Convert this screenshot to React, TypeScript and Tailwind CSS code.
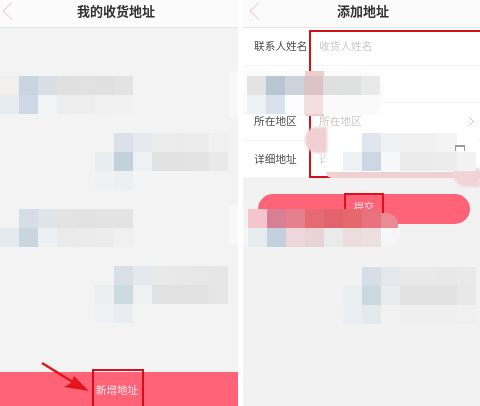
import React from 'react';

const Back: React.FC = () => (
    <svg width="14" height="20" viewBox="0 0 14 20" fill="none" stroke="#eebcc6" strokeWidth="1">
        <path d="M12 1.5L3 10l9 8.5" />
    </svg>
);

const Tiles: React.FC<{ className?: string; rows: string[][] }> = ({ className = '', rows }) => (
    <div className={`flex flex-col ${className}`}>
        {rows.map((row, i) => (
            <div key={i} className="flex h-[19px]">
                {row.map((color, j) => (
                    <div key={j} className={`w-[19px] h-full shrink-0 ${color}`} />
                ))}
            </div>
        ))}
    </div>
);

const Row: React.FC<{ label: string; hint: string; right?: React.ReactNode }> = ({ label, hint, right }) => (
    <div className="h-[37.5px] flex items-center border-b border-[#f4f4f4] pl-[11px] pr-[6px] text-[10.7px] whitespace-nowrap">
        <span className="w-[65px] text-[#4d4d4d]">{label}</span>
        <span className="flex-1 text-[#c9c9c9]">{hint}</span>
        {right}
    </div>
);

export default function App() {
    return (
        <div className="relative w-[480px] h-[406px] overflow-hidden bg-white flex justify-between font-['Liberation_Sans','Noto_Sans_CJK_SC',sans-serif] blur-[0.35px]">
            {/* left phone */}
            <div className="w-[238px] h-full flex flex-col bg-[#f3f3f3]">
                <header className="h-[28px] shrink-0 flex items-center justify-center relative bg-[#fbfbfb] border-b border-[#e4e4e4]">
                    <div className="absolute left-0 top-[1px]"><Back /></div>
                    <h1 className="text-[13px] font-bold text-[#333] mt-[-3px] ml-[-6px]">我的收货地址</h1>
                </header>
                <div className="flex-1 flex flex-col gap-[19px] pt-[48px]">
                    <Tiles rows={[
                        ['bg-[#f1f0ee]', 'bg-[#c9d5e0]', 'bg-[#d8dde6]', 'bg-[#e0e0e0]', 'bg-[#e1e1e1]', 'bg-[#e0e0e0]', 'bg-[#e3e3e3]'],
                        ['bg-[#e6ebf0]', 'bg-[#cfd9e5]', 'bg-[#f2f3f5]', 'bg-[#ededed]', 'bg-[#eeeeee]', 'bg-[#f0f0f0]', 'bg-[#f1f1f1]'],
                    ]} />
                    <Tiles className="pl-[95px]" rows={[
                        ['bg-[#f3f3f3]', 'bg-[#dbe1ea]', 'bg-[#e6eaf0]', 'bg-[#ececec]', 'bg-[#ebebeb]', 'bg-[#ececec]', 'bg-[#f0f0f0]'],
                        ['bg-[#e8edee]', 'bg-[#c3d1dc]', 'bg-[#eef1f3]', 'bg-[#e2e2e2]', 'bg-[#e2e2e2]', 'bg-[#e3e3e3]', 'bg-[#e9e9e9]'],
                        ['bg-[#f0f1f4]', 'bg-[#edf0f3]', 'bg-[#f4f4f4]', 'bg-[#f4f4f4]', 'bg-[#f4f4f4]', 'bg-[#f4f4f4]', 'bg-[#f4f4f4]'],
                    ]} />
                    <Tiles rows={[
                        ['bg-[#f3f3f3]', 'bg-[#d5dee6]', 'bg-[#dfe4ea]', 'bg-[#e3e3e3]', 'bg-[#e2e2e2]', 'bg-[#e3e3e3]', 'bg-[#e3e3e3]'],
                        ['bg-[#e4eaef]', 'bg-[#c9d6e0]', 'bg-[#edf0f2]', 'bg-[#eaeaea]', 'bg-[#ebebeb]', 'bg-[#ececec]', 'bg-[#f0f0f0]'],
                    ]} />
                    <Tiles className="pl-[95px]" rows={[
                        ['bg-[#f3f3f3]', 'bg-[#d8dfe7]', 'bg-[#e5e9ee]', 'bg-[#e9e9e9]', 'bg-[#e8e8e8]', 'bg-[#e7e7e7]', 'bg-[#e6e6e6]'],
                        ['bg-[#ebeff0]', 'bg-[#cddae2]', 'bg-[#eef0f2]', 'bg-[#e1e1e1]', 'bg-[#e1e1e1]', 'bg-[#e2e2e2]', 'bg-[#e6e6e6]'],
                        ['bg-[#eff1f4]', 'bg-[#e9edf2]', 'bg-[#f3f3f3]', 'bg-[#f3f3f3]', 'bg-[#f3f3f3]', 'bg-[#f3f3f3]', 'bg-[#f3f3f3]'],
                    ]} />
                </div>
                <div className="h-[34px] shrink-0 bg-[#ff6378] flex items-center justify-center pt-[4px] text-[10.5px] text-[#ffe3e6]">
                    <span className="ml-[-4px]">新增地址</span>
                </div>
            </div>

            {/* right phone */}
            <div className="w-[237px] h-full flex flex-col bg-[#f2f2f2]">
                <header className="h-[28px] shrink-0 flex items-center justify-center relative bg-[#fbfbfb] border-b border-[#e4e4e4]">
                    <div className="absolute left-[4px] top-[1px]"><Back /></div>
                    <h1 className="text-[13px] font-bold text-[#333] mt-[-3px] ml-[3px]">添加地址</h1>
                </header>
                <div className="bg-white">
                    <Row label="联系人姓名" hint="收货人姓名" />
                    <Row label="" hint="" />
                    <Row label="所在地区" hint="所在地区" right={
                        <svg width="5" height="9" viewBox="0 0 5 9" fill="none" stroke="#c4c4c4" strokeWidth="1"><path d="M.5.5l4 4-4 4" /></svg>
                    } />
                    <Row label="详细地址" hint="详细地址" />
                </div>
                <div className="mt-[16px] ml-[15px] mr-[10px] h-[30px] rounded-full bg-[#ff6378] flex items-center justify-center text-[10px] text-[#ffe3e6]">
                    <span className="mt-[-4px]">提交</span>
                </div>
                <Tiles className="mt-[43px] pl-[100px]" rows={[
                    ['bg-[#f2f2f2]', 'bg-[#d8dee7]', 'bg-[#e4e8ec]', 'bg-[#e9e9e9]', 'bg-[#e9e9e9]', 'bg-[#e8e8e8]', 'bg-[#e9e9e9]'],
                    ['bg-[#e9eeef]', 'bg-[#cbd8e0]', 'bg-[#e9ecef]', 'bg-[#e1e1e1]', 'bg-[#e1e1e1]', 'bg-[#e1e1e1]', 'bg-[#e8e8e8]'],
                    ['bg-[#ebeef2]', 'bg-[#e4e9ee]', 'bg-[#f2f2f2]', 'bg-[#efefef]', 'bg-[#efefef]', 'bg-[#efefef]', 'bg-[#f0f0f0]'],
                ]} />
            </div>

            {/* smudges and mosaics lying over the screenshots */}
            <div className="absolute left-[229px] top-[71px] w-[9px] h-[47px] rounded-l bg-[#f8f8f8]" />
            <div className="absolute left-[229px] top-[205px] w-[9px] h-[40px] rounded-l bg-[#f8f8f8]" />

            <div className="absolute left-[243px] top-[71px] w-[141px] h-[45px] rounded-r-[20px] bg-[#fbfbfb]" />
            <div className="absolute left-[309px] top-[30px] w-[171px] h-[148px] border-2 border-r-0 border-[#d3101a]" />
            <div className="absolute left-[305px] top-[71px] w-[19px] h-[45px] bg-[#f0cdcd]" />
            <div className="absolute left-[325px] top-[133px] w-[155px] h-[40px] rounded-tr-[24px] bg-white" />
            <div className="absolute left-[305px] top-[127px] w-[22px] h-[26px] rounded-l-[12px] bg-[#f0d0d2] blur-[1px]" />
            <div className="absolute left-[326px] top-[172px] w-[154px] h-[6px] rounded-bl-[6px] bg-[#f0d0d2] blur-[0.5px]" />
            <div className="absolute left-[453px] top-[168px] w-[27px] h-[19px] rounded-bl-[14px] bg-[#f0d4d6] blur-[1px]" />
            <Tiles className="absolute left-[247px] top-[76px]" rows={[
                ['bg-[#e3e3e3]', 'bg-[#b8c6d2]', 'bg-[#ccd3da]', 'bg-[#dcc4c4]', 'bg-[#dedfe0]', 'bg-[#dfe0e0]', 'bg-[#e9e9e9]'],
                ['bg-[#edf1f4]', 'bg-[#d9e2ec]', 'bg-[#fbfcfd]', 'bg-[#f2dede]', 'bg-[#fafafa]', 'bg-[#fafafa]', 'bg-[#fafafa]'],
            ]} />
            <Tiles className="absolute left-[343px] top-[133px]" rows={[
                ['bg-white', 'bg-[#dfe6ee]', 'bg-[#eff2f5]', 'bg-[#f1f1f1]', 'bg-[#f1f1f1]', 'bg-[#f4f4f4]', 'bg-white'],
                ['bg-[#eef1f3]', 'bg-[#cbd8e3]', 'bg-[#f6f7f9]', 'bg-[#ebebeb]', 'bg-[#ebebeb]', 'bg-[#ececec]', 'bg-[#f2f2f2]'],
            ]} />
            <div className="absolute left-[455px] top-[145px] w-[10px] h-[6px] border-t-2 border-x border-[#9b9b9b]" />

            <div className="absolute left-[344px] top-[193px] w-[40px] h-[20px] border-2 border-b-0 border-[#e0101a]" />
            <div className="absolute left-[243px] top-[228px] w-[157px] h-[19px] rounded-br-[14px] bg-[#f6f6f6]" />
            <div className="absolute left-[381px] top-[213px] w-[17px] h-[15px] rounded-tr-[12px] bg-[#ea8a94]" />
            <Tiles className="absolute left-[248px] top-[209px]" rows={[
                ['bg-[#f4c5cc]', 'bg-[#d87f95]', 'bg-[#e5808f]', 'bg-[#e66a74]', 'bg-[#e2636c]', 'bg-[#e5686f]', 'bg-[#e8737f]'],
                ['bg-[#e6ecee]', 'bg-[#c3d1df]', 'bg-[#eed6da]', 'bg-[#e9d3d5]', 'bg-[#e9eaea]', 'bg-[#ecdcdd]', 'bg-[#ecdfdf]'],
            ]} />

            {/* callouts */}
            <div className="absolute left-[92px] top-[369px] w-[52px] h-[37px] border-2 border-b-0 border-[#d3101a]" />
            <svg className="absolute left-[38px] top-[358px]" width="56" height="40" viewBox="0 0 56 40">
                <path d="M4 5L38 26" stroke="#e3141c" strokeWidth="2.5" />
                <path d="M51 33L26 29L33 25L36 18Z" fill="#e3141c" />
            </svg>
        </div>
    );
}
